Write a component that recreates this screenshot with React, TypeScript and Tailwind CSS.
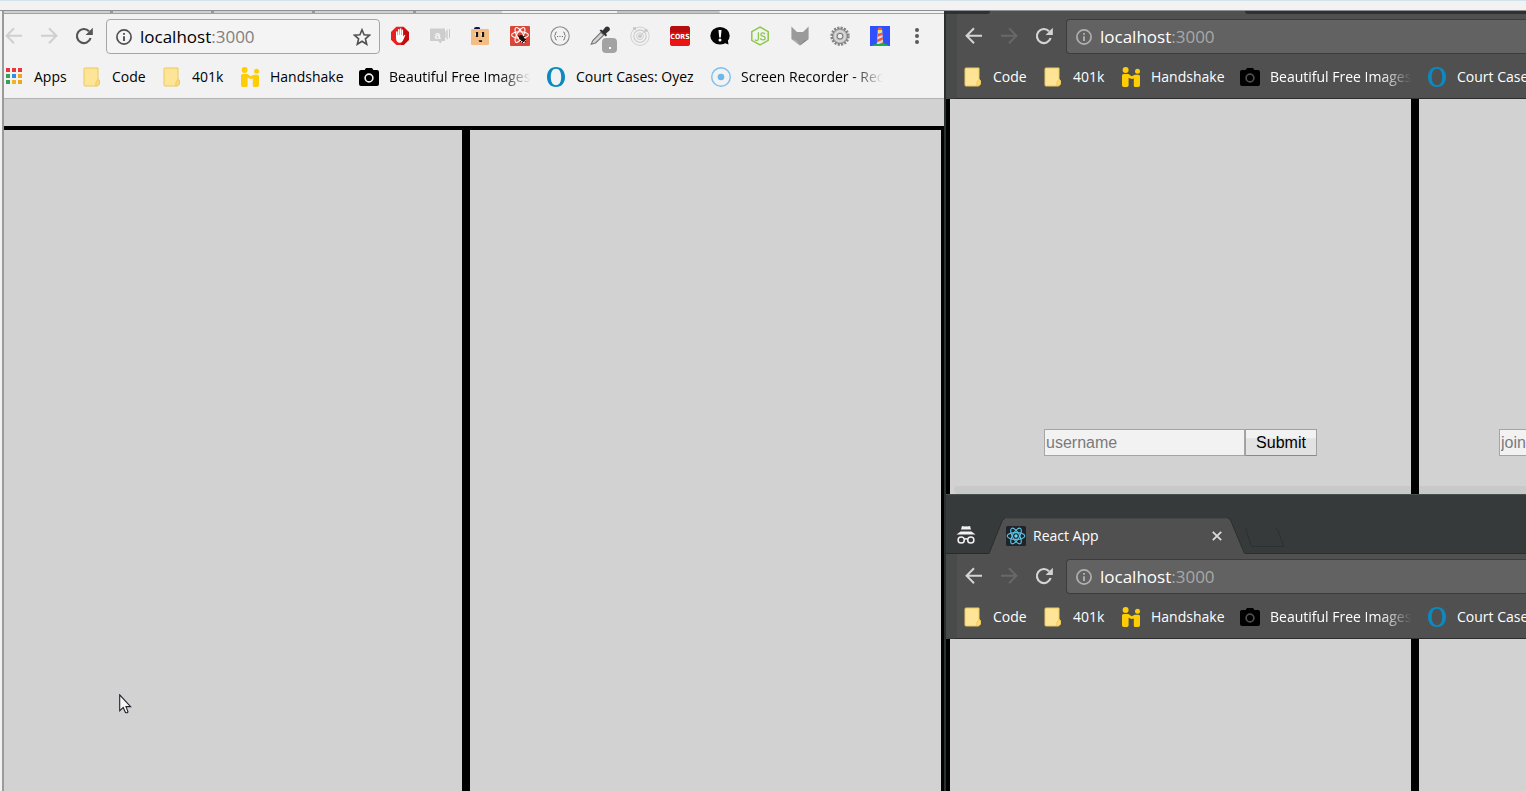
import React from "react";
import clsx from "clsx";

type IconProps = { dark?: boolean };

/* ---------- toolbar glyphs ---------- */

function ArrowIcon({ flip }: { flip?: boolean }) {
  return (
    <svg viewBox="0 0 20 20" className={clsx("h-5 w-5", flip && "-scale-x-100")} fill="none" stroke="currentColor" strokeWidth="2">
      <path d="M18 9.7H3M10 2.2L2.6 9.7L10 17.2" />
    </svg>
  );
}

function ReloadIcon() {
  return (
    <svg viewBox="0 0 20 20" className="h-5 w-5" fill="none">
      <path d="M16.6 12A7 7 0 1 1 15 5.2" stroke="currentColor" strokeWidth="2.2" />
      <path d="M18.8 1.8V9H11.6Z" fill="currentColor" />
    </svg>
  );
}

function InfoIcon() {
  return (
    <svg viewBox="0 0 16 16" className="h-4 w-4 shrink-0" fill="none" stroke="currentColor">
      <circle cx="8" cy="8" r="7.1" strokeWidth="1.7" />
      <path d="M8 7.2V12M8 4V5.8" strokeWidth="1.9" />
    </svg>
  );
}

function StarIcon() {
  return (
    <svg viewBox="0 0 18 18" className="h-[18px] w-[18px]" fill="none" stroke="currentColor" strokeWidth="1.6">
      <path d="M9 1.8L11.1 6.8L16.6 7.2L12.4 10.8L13.7 16.2L9 13.3L4.3 16.2L5.6 10.8L1.4 7.2L6.9 6.8Z" />
    </svg>
  );
}

function MenuIcon() {
  return (
    <svg viewBox="0 0 20 20" className="h-5 w-5" fill="#5a5a5a">
      <circle cx="10" cy="4" r="2" />
      <circle cx="10" cy="10" r="2" />
      <circle cx="10" cy="16" r="2" />
    </svg>
  );
}

/* ---------- extension icons ---------- */

const extensions: { name: string; art: React.ReactNode }[] = [
  {
    name: "Ad blocker",
    art: (
      <>
        <path d="M6.3 .8H13.7L19 6.1V13.7L13.7 19H6.3L1 13.7V6.1Z" fill="#e8201e" />
        <path d="M12.5 1L19 6.5V13.7L13.7 19H11Z" fill="#c40c10" />
        <path d="M6 12V6.2Q6 5.2 6.8 5.2T7.6 6V9.2H8V3.8Q8 3 8.7 3T9.5 3.8V9H9.9V3Q9.9 2.2 10.6 2.2T11.3 3V9H11.7V4.2Q11.7 3.4 12.4 3.4T13.1 4.2V10.4L14.4 9Q15.6 8.4 15.2 9.6L13 14.6Q12.2 16.8 9.8 16.8Q6 16.8 6 12Z" fill="#fff" />
      </>
    ),
  },
  {
    name: "Video chat",
    art: (
      <>
        <path d="M0 2.5H15V15H12L10.5 17.5L8 15H0Z" fill="#cdcdcd" />
        <path d="M15 6L18 3V14L15 11Z" fill="#d6d6d6" />
        <path d="M19.5 3V12" stroke="#c8c8c8" />
        <text x="7.5" y="12.5" textAnchor="middle" fontSize="11" fontWeight="700" fill="#f5f5f5" fontFamily="Liberation Sans, sans-serif">a</text>
      </>
    ),
  },
  {
    name: "Box face",
    art: (
      <>
        <path d="M4 3Q4 1 6 1H8.5Q10.2 1 10.2 3Z" fill="#15154f" />
        <rect x="1" y="3" width="18" height="16" rx="1.2" fill="#f3bd84" />
        <path d="M7 6V11M13 6V11" stroke="#161616" strokeWidth="2.2" />
        <path d="M5.4 7V9.5M11.4 7V9.5" stroke="#fff2d8" />
        <path d="M8.5 14.2H12V16H9.5Z" fill="#161616" />
      </>
    ),
  },
  {
    name: "React devtools",
    art: (
      <>
        <rect width="20" height="20" rx="1" fill="#dc4638" />
        <g fill="none" stroke="#fff" strokeWidth="1.1">
          <ellipse cx="10" cy="9" rx="8.4" ry="3.2" />
          <ellipse cx="10" cy="9" rx="8.4" ry="3.2" transform="rotate(60 10 9)" />
          <ellipse cx="10" cy="9" rx="8.4" ry="3.2" transform="rotate(120 10 9)" />
        </g>
        <ellipse cx="12" cy="12.3" rx="2.2" ry="3.8" transform="rotate(-40 12 12.3)" fill="#1c0d0a" />
        <path d="M8 9.5L16 16M9 13L15 10M10 16L14 12M12 17L16 13M12 9V11" stroke="#1c0d0a" />
      </>
    ),
  },
  {
    name: "JSON viewer",
    art: (
      <>
        <circle cx="10" cy="10" r="9.2" fill="none" stroke="#8c8c8c" strokeWidth="1.1" />
        <path d="M6.8 6Q5.4 6 5.4 7.4V9L4.3 10L5.4 11V12.6Q5.4 14 6.8 14M13.2 6Q14.6 6 14.6 7.4V9L15.7 10L14.6 11V12.6Q14.6 14 13.2 14" fill="none" stroke="#777" />
        <path d="M7 10.5H8.2M9.4 10.5H10.6M11.8 10.5H13" stroke="#777" />
      </>
    ),
  },
  {
    name: "Color picker",
    art: (
      <>
        <path d="M1.2 18.2L2.8 14.5L11 6.3L13.8 9L5.6 17Z" fill="#d4d4d4" stroke="#777" strokeWidth="1.1" />
        <path d="M9.5 4.5L11 3.4L12.7 4.6L15.5 1Q17.2-.2 19 1.2Q20.6 3 19.3 4.8L16 7.6L17 9.2L15.8 10.6Z" fill="#303238" />
      </>
    ),
  },
  {
    name: "Radar",
    art: (
      <g fill="none" stroke="#cfcfcf">
        <circle cx="10" cy="10.2" r="9.2" />
        <circle cx="10" cy="10.2" r="6.2" strokeWidth="1.3" />
        <circle cx="10" cy="10.2" r="3.4" />
        <circle cx="10" cy="10.2" r="1.5" fill="#c4c4c4" />
        <path d="M10 10L14 6" />
        <path d="M3 2.5H6M14.5 4.5H17.5" stroke="#c4c4c4" strokeWidth="2.4" />
      </g>
    ),
  },
  {
    name: "CORS toggle",
    art: (
      <>
        <rect width="20" height="20" rx="3" fill="#d21010" />
        <path d="M0 3Q0 0 3 0H17Q20 0 20 3V6H0Z" fill="#b30d12" />
        <path d="M0 14H20V17Q20 20 17 20H3Q0 20 0 17Z" fill="#ea1414" />
        <text x="10" y="12.6" textAnchor="middle" fontSize="7" fontWeight="700" fill="#fff" fontFamily="Liberation Sans Narrow, DejaVu Sans Condensed, sans-serif">CORS</text>
      </>
    ),
  },
  {
    name: "Alert bubble",
    art: (
      <>
        <ellipse cx="10" cy="9.8" rx="9.7" ry="8.8" fill="#050505" />
        <path d="M12 16L18.5 18.6L17.5 12Z" fill="#050505" />
        <path d="M8.5 4H11.5L10.8 11.6H9.2Z" fill="#fff" />
        <circle cx="10" cy="14" r="1.5" fill="#fff" />
      </>
    ),
  },
  {
    name: "Node manager",
    art: (
      <g fill="none" stroke="#8cc84b" strokeWidth="1.5">
        <path d="M10 1L18.2 5.6V14.4L10 19L1.8 14.4V5.6Z" />
        <path d="M8.4 6.2V12.8Q8.4 14.6 6.7 14.6Q5.4 14.6 5 13.6" strokeWidth="1.3" />
        <path d="M15 8.2Q14.6 6.9 12.8 6.9Q10.9 6.9 10.9 8.4T13 10.2T15.2 12.2T12.9 13.8T10.6 12.3" strokeWidth="1.3" />
      </g>
    ),
  },
  {
    name: "Fox",
    art: (
      <>
        <path d="M1.4 .5L7 6H13L18.6 .5V13L10 19.5L1.4 13Z" fill="#9a9a9a" />
        <path d="M1.4 13L6 14.2L10 19.5Z" fill="#b2b2b2" />
        <path d="M18.6 13L14 14.2L10 19.5Z" fill="#8a8a8a" />
      </>
    ),
  },
  {
    name: "Gear",
    art: (
      <>
        <circle cx="10" cy="10.2" r="8.2" fill="none" stroke="#858585" strokeWidth="3" strokeDasharray="2 1.25" />
        <circle cx="10" cy="10.2" r="7.5" fill="#b4b4b4" stroke="#777" strokeWidth=".8" />
        <circle cx="10" cy="10.2" r="5" fill="none" stroke="#d9d9d9" strokeWidth="2" />
        <circle cx="10" cy="10.2" r="2.8" fill="#eee" stroke="#777" />
      </>
    ),
  },
  {
    name: "Lighthouse",
    art: (
      <>
        <rect width="20" height="20" fill="#304ffe" />
        <path d="M1.5 20Q3 18 10 17.6T19 20Z" fill="#1cab4c" />
        <path d="M7.8 5.5H12.2L13.2 18H6.8Z" fill="#d9dde6" />
        <path d="M7.6 7.8L12.4 6.5V9L7.2 11ZM7 13.6L12.8 11V13.8L6.7 16.6ZM9 18L13.2 16V18Z" fill="#ef5b35" />
        <path d="M7.6 3.4Q8 1.2 10 1.2T12.4 3.4V4H7.6Z" fill="#ef5b35" />
        <rect x="7.8" y="4" width="4.4" height="2" fill="#ffe04a" />
      </>
    ),
  },
];

/* ---------- bookmark icons ---------- */

function AppsIcon() {
  const colors = ["#e8383b", "#e8383b", "#e8383b", "#34a058", "#2f8fe8", "#f0a818", "#34a058", "#f0b428", "#f0a818"];
  return (
    <svg viewBox="0 0 20 20" className="h-5 w-5">
      {colors.map((c, i) => (
        <rect key={i} x={2 + (i % 3) * 6} y={1 + Math.floor(i / 3) * 6} width="4" height="4" fill={c} />
      ))}
    </svg>
  );
}

function FolderIcon() {
  return (
    <svg viewBox="0 0 20 20" className="h-5 w-5">
      <path d="M3 1H16V12L17.5 13.5V17L15.5 19H3Q2 19 2 18V2Q2 1 3 1Z" fill="#fee496" stroke="#ecc85a" />
      <path d="M13.8 18.5V15.6L15.8 12.6L17.4 14V17L15.6 18.8Z" fill="#fdd876" stroke="#ecc85a" strokeWidth=".8" />
    </svg>
  );
}

function HandshakeIcon() {
  return (
    <svg viewBox="0 0 20 20" className="h-5 w-5" fill="#ffcd05">
      <circle cx="4.6" cy="3" r="3" />
      <circle cx="16.5" cy="4.3" r="2.5" />
      <path d="M1 8.5Q1 7 2.5 7H7.5L10.5 9.2L14 7.8H17.5Q19 7.8 19 9.3V18.2Q19 20 17.3 20H14.2Q12.8 20 12.8 18.4V11.4L10.5 12L7.6 10.8V18.3Q7.6 20 6 20H2.8Q1 20 1 18.2Z" />
    </svg>
  );
}

function CameraIcon({ dark }: IconProps) {
  return (
    <svg viewBox="0 0 20 20" className="h-5 w-5">
      <path d="M5.6 3L7 1H13L14.4 3H18Q20 3 20 5V17Q20 19 18 19H2Q0 19 0 17V5Q0 3 2 3Z" fill="#000" />
      <circle cx="10" cy="11" r="3.9" fill="none" stroke={dark ? "#505050" : "#f2f2f2"} strokeWidth="1.6" />
    </svg>
  );
}

function OyezIcon() {
  return (
    <svg viewBox="0 0 20 20" className="h-5 w-5">
      <path fillRule="evenodd" d="M10 0C15.6 0 19 4 19 10S15.6 20 10 20S1 16 1 10S4.4 0 10 0ZM10 1.8C6.6 1.8 4.8 5 4.8 10S6.6 18.2 10 18.2S15.2 15 15.2 10S13.4 1.8 10 1.8Z" fill="#0a8ac0" />
    </svg>
  );
}

function RecorderIcon() {
  return (
    <svg viewBox="0 0 20 20" className="h-5 w-5">
      <circle cx="10" cy="10" r="9.3" fill="none" stroke="#7cc0ec" strokeWidth="1.4" />
      <circle cx="10" cy="10" r="3.3" fill="#6cb8ec" />
    </svg>
  );
}

type Bookmark = { label: string; width: string; icon: (p: IconProps) => React.ReactNode; fade?: boolean };

const bookmarks: Bookmark[] = [
  { label: "Code", width: "w-[35px]", icon: () => <FolderIcon /> },
  { label: "401k", width: "w-[33px]", icon: () => <FolderIcon /> },
  { label: "Handshake", width: "w-[74px]", icon: () => <HandshakeIcon /> },
  { label: "Beautiful Free Images", width: "w-[142px]", icon: (p) => <CameraIcon {...p} />, fade: true },
  { label: "Court Cases: Oyez", width: "w-[120px]", icon: () => <OyezIcon /> },
];

const lightBookmarks: Bookmark[] = [
  { label: "Apps", width: "w-[33px]", icon: () => <AppsIcon /> },
  ...bookmarks,
  { label: "Screen Recorder - Rec", width: "w-[142px]", icon: () => <RecorderIcon />, fade: true },
];

/* ---------- browser chrome ---------- */

function Toolbar({ dark }: IconProps) {
  const items = dark ? bookmarks : lightBookmarks;
  return (
    <header
      className={clsx(
        "overflow-hidden border-b",
        dark ? "border-[#2b2d2d] border-l-[11px] border-l-[#484b4a] bg-[#505050] pl-1.5 text-white" : "border-[#b3b3b3] bg-[#f2f2f2] text-black",
      )}
    >
      <div className="flex items-center pt-[5px]">
        <nav className={clsx("flex shrink-0 gap-[15px] pr-3 pb-px", dark ? "pl-px text-[#d4d4d4]" : "text-[#555]")}>
          <button type="button" aria-label="Back" className={dark ? "" : "text-[#cfcfcf]"}><ArrowIcon /></button>
          <button type="button" aria-label="Forward" className={dark ? "text-[#686868]" : "text-[#cfcfcf]"}><ArrowIcon flip /></button>
          <button type="button" aria-label="Reload"><ReloadIcon /></button>
        </nav>
        <div
          className={clsx(
            "flex h-[35px] min-w-0 flex-1 items-center gap-2 pl-[9px] text-[17px]",
            dark ? "rounded-l border border-r-0 border-[#3c3c3c] bg-[#626262]" : "rounded-sm border border-[#a6a6a6] bg-[#f4f4f4] pr-2",
          )}
        >
          <span className={dark ? "text-[#b0b0b0]" : "text-[#505050]"}><InfoIcon /></span>
          <span className="flex-1 leading-6">
            localhost<span className={dark ? "text-[#a8a8a8]" : "text-[#808080]"}>:3000</span>
          </span>
          {!dark && <button type="button" aria-label="Bookmark this page" className="text-[#505050]"><StarIcon /></button>}
        </div>
        {!dark && (
          <div className="flex shrink-0 gap-5 pb-px pl-2.5">
            {extensions.map((ext) => (
              <button key={ext.name} type="button" aria-label={ext.name} className="relative">
                <svg viewBox="0 0 20 20" className="h-5 w-5">{ext.art}</svg>
                {ext.name === "Color picker" && (
                  <span className="absolute top-3 left-3 flex h-[15px] w-[15px] items-center justify-center rounded-sm bg-[#a3a3a3]">
                    <span className="mt-1 h-0.5 w-0.5 bg-white" />
                  </span>
                )}
              </button>
            ))}
          </div>
        )}
        {!dark && <button type="button" aria-label="Menu" className="mx-[17px] shrink-0 pb-px"><MenuIcon /></button>}
      </div>
      <div className="flex h-11 items-center gap-[15px] pt-0.5 text-[14px] leading-5">
        {items.map((b) => (
          <a key={b.label} href="#" className="flex shrink-0 items-center gap-2.5">
            {b.icon({ dark })}
            <span
              className={clsx(
                "whitespace-nowrap",
                b.width,
                b.fade && "overflow-hidden [mask-image:linear-gradient(to_right,black_78%,transparent)]",
              )}
            >
              {b.label}
            </span>
          </a>
        ))}
      </div>
    </header>
  );
}

function LightTabEdge() {
  return (
    <div className="flex h-[3px] shrink-0 border-b border-[#a0a0a0] bg-[#f2f2f2]">
      <div className="flex w-[53%] overflow-hidden bg-[#d0d0d0] pl-[106px]">
        {[0, 1, 2, 3].map((n) => (
          <span key={n} className="mr-[98px] h-0.5 w-[3px] shrink-0 bg-[#999]" />
        ))}
      </div>
      <div className="w-[12.2%] rounded-t-sm bg-[#f2f2f2]" />
      <div className="w-[11%] rounded-tr-sm bg-[#c4c4c4]" />
    </div>
  );
}

function DarkTabEdge() {
  return (
    <div className="flex h-[3px] shrink-0 justify-between bg-[#505050]">
      <div className="w-11 rounded-br-sm bg-[#2c3233]" />
      <div className="w-[48.5%] rounded-bl-sm bg-[#2c3233]" />
    </div>
  );
}

function IncognitoIcon() {
  return (
    <svg viewBox="0 0 20 20" className="h-5 w-5" fill="#f2f2f2">
      <path d="M6 1L8.6 1.6L10 1.2L11.4 1.6L14 1L15 4.6H5Z" />
      <path d="M.5 9.4L4.6 6.6H15.4L19.5 9.4Z" />
      <g fill="none" stroke="#f2f2f2" strokeWidth="1.5">
        <circle cx="5.2" cy="15" r="3.1" />
        <circle cx="14.8" cy="15" r="3.1" />
        <path d="M8.3 14.4Q10 13.2 11.7 14.4" />
      </g>
    </svg>
  );
}

function ReactIcon() {
  return (
    <svg viewBox="0 0 20 20" className="h-5 w-5">
      <rect width="20" height="20" rx="1.5" fill="#20232a" />
      <g fill="none" stroke="#5ac8e6" strokeWidth="1.1">
        <ellipse cx="10" cy="10" rx="8.8" ry="3.4" />
        <ellipse cx="10" cy="10" rx="8.8" ry="3.4" transform="rotate(60 10 10)" />
        <ellipse cx="10" cy="10" rx="8.8" ry="3.4" transform="rotate(120 10 10)" />
      </g>
      <circle cx="10" cy="10" r="1.7" fill="#61dafb" />
    </svg>
  );
}

function TabStrip() {
  return (
    <div className="flex h-[60px] shrink-0 items-end border-t border-[#4a4f50] bg-[#363a3b] text-[14px] text-white">
      <div className="flex h-9 w-[43px] shrink-0 items-center border-b border-[#262a2a] pb-0.5 pl-2.5">
        <IncognitoIcon />
      </div>
      <svg viewBox="0 0 16 36" className="h-9 w-4 shrink-0">
        <path d="M0 36L13.5 2Q14 .5 16 .5V36Z" fill="#505050" />
        <path d="M0 35.5L13.5 2Q14 .5 16 .5" fill="none" stroke="#2a2e2e" />
      </svg>
      <div className="flex h-9 w-[223px] shrink-0 items-center border-t border-[#454949] bg-[#505050] pb-0.5">
        <span className="pl-px"><ReactIcon /></span>
        <span className="flex-1 pl-[7px] leading-5">React App</span>
        <button type="button" aria-label="Close tab" className="pr-[5px]">
          <svg viewBox="0 0 12 12" className="h-3 w-3" stroke="#dadada" strokeWidth="1.9">
            <path d="M1.8 1.8L10.2 10.2M10.2 1.8L1.8 10.2" />
          </svg>
        </button>
      </div>
      <svg viewBox="0 0 17 36" className="h-9 w-[17px] shrink-0">
        <path d="M0 .5Q2 .5 2.5 2L17 36H0Z" fill="#505050" />
        <path d="M0 .5Q2 .5 2.5 2L16.5 35.5" fill="none" stroke="#2a2e2e" />
      </svg>
      <div className="flex h-9 flex-1 border-b border-[#2a2e2e]">
        <button type="button" aria-label="New tab" className="self-start pt-[9px]">
          <svg viewBox="0 0 40 20" className="h-5 w-10" fill="none" stroke="#2b3031">
            <path d="M.5 1L6 18Q6.5 19.5 8 19.5H39L33 4L31 1" />
          </svg>
        </button>
      </div>
    </div>
  );
}

function DarkPage({ form }: { form?: boolean }) {
  return (
    <main className="grid min-h-0 flex-1 grid-cols-[minmax(0,469fr)_minmax(0,111fr)] bg-[#d2d2d2] font-['Liberation_Sans',Arial,sans-serif] text-[16px]">
      <section className="flex flex-col justify-end border-x-4 border-black">
        {form && (
          <>
            <form className="flex justify-center pb-[30px]" onSubmit={(e) => e.preventDefault()}>
              <input
                type="text"
                aria-label="username"
                placeholder="username"
                className="h-[27px] w-[201px] border border-[#a5a5a5] bg-[#f2f2f2] px-px placeholder:text-[#7a7a7a]"
              />
              <button type="submit" className="h-[27px] w-[72px] border border-[#a0a0a0] border-b-[#8a8a8a] bg-linear-to-b from-[#f2f2f2] from-30% to-[#e2e2e2] to-35% leading-6 text-black">
                Submit
              </button>
            </form>
            <div className="ml-1 h-2 rounded-l bg-[#c9c9c9]" />
          </>
        )}
      </section>
      <section className="flex flex-col justify-end overflow-hidden border-l-4 border-black">
        {form && (
          <>
            <form className="flex pb-[30px] pl-20" onSubmit={(e) => e.preventDefault()}>
              <input
                type="text"
                aria-label="join"
                placeholder="join"
                className="h-[27px] w-[201px] shrink-0 border border-[#a5a5a5] bg-[#f2f2f2] px-px placeholder:text-[#7a7a7a]"
              />
            </form>
            <div className="h-2 bg-[#c9c9c9]" />
          </>
        )}
      </section>
    </main>
  );
}

function Pointer() {
  return (
    <svg viewBox="0 0 14 21" className="absolute top-[694px] left-[119px] h-[21px] w-3.5">
      <path d="M.7 .8V16.8L4.2 13.5L6.5 18.5Q7.8 19.3 9 17.8L7 12.6H11.6Z" fill="#f6f6f6" stroke="#20222c" strokeWidth="1.1" />
    </svg>
  );
}

export default function App() {
  return (
    <div className="relative flex h-screen flex-col overflow-hidden bg-[#f2f2f2] font-['Open_Sans','Noto_Sans',sans-serif]">
      <div className="h-[11px] shrink-0 border-t border-b border-t-[#d4e2ec] border-b-[#909090]" />
      <div className="grid min-h-0 flex-1 grid-cols-[minmax(0,472fr)_minmax(0,291fr)]">
        <div className="ml-0.5 flex min-w-0 flex-col border-l-2 border-[#9a9a9a]">
          <LightTabEdge />
          <Toolbar />
          <main className="flex flex-1 flex-col bg-[#d2d2d2] pt-[27px]">
            <div className="grid flex-1 grid-cols-[462fr_478fr] border-t-4 border-black">
              <section className="border-r-4 border-black" />
              <section className="border-r-[3px] border-l-4 border-black" />
            </div>
          </main>
        </div>
        <div className="grid min-h-0 min-w-0 grid-rows-[minmax(0,483fr)_minmax(0,297fr)] border-l-2 border-[#2a2f2f]">
          <div className="flex min-h-0 min-w-0 flex-col">
            <DarkTabEdge />
            <Toolbar dark />
            <DarkPage form />
          </div>
          <div className="flex min-h-0 min-w-0 flex-col">
            <TabStrip />
            <Toolbar dark />
            <DarkPage />
          </div>
        </div>
      </div>
      <Pointer />
    </div>
  );
}
